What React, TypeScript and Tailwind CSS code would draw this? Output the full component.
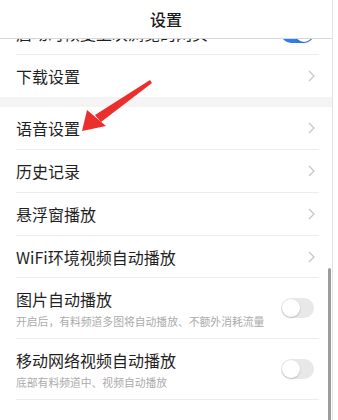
import React from 'react';

const FONT = '"Noto Sans CJK SC", "Noto Sans", sans-serif';

function Chevron() {
  return (
    <svg width="7" height="12" viewBox="0 0 7 12" className="mr-[4px]">
      <polyline points="1,1 6,6 1,11" fill="none" stroke="#c4c4c4" strokeWidth="1.2" />
    </svg>
  );
}

function Toggle({ on }: { on?: boolean }) {
  return (
    <div
      className={`w-[33px] h-[20px] rounded-full relative mr-[5px] ${on ? 'bg-[#2f7cf3]' : 'bg-[#e8e8e8]'}`}
    >
      <div
        className={`absolute top-[1px] w-[18px] h-[18px] rounded-full bg-white shadow-[0_1px_2px_rgba(0,0,0,0.2)] ${on ? 'right-[1px]' : 'left-[1px]'}`}
      />
    </div>
  );
}

function Row({ title, h = 'h-[43px]', line = true, right }: { title: string; h?: string; line?: boolean; right: React.ReactNode }) {
  return (
    <div className="pl-4 bg-white">
      <div className={`${h} mr-[13px] flex items-center justify-between ${line ? 'border-b border-[#ececec]' : ''}`}>
        <span className="text-[16px] text-[#1f1f1f] leading-none">{title}</span>
        {right}
      </div>
    </div>
  );
}

function Row2({ title, sub, on }: { title: string; sub: string; on?: boolean }) {
  return (
    <div className="pl-4 bg-white">
      <div className="h-[61px] mr-[13px] flex items-center justify-between border-b border-[#ececec]">
        <div className="flex flex-col">
          <span className="text-[16px] text-[#1f1f1f] leading-none pt-[2px]">{title}</span>
          <span className="text-[10.8px] text-[#ababab] leading-none mt-[9px]">{sub}</span>
        </div>
        <Toggle on={on} />
      </div>
    </div>
  );
}

export default function App() {
  return (
    <div className="w-[338px] h-[420px] overflow-hidden relative bg-white" style={{ fontFamily: FONT }}>
      <div className="flex h-full">
        <div className="w-[333px] flex flex-col border-r border-[#e4e4e4]">
          <div className="h-[39px] shrink-0 flex items-center justify-center border-b border-[#d8d8d8] bg-white">
            <span className="text-[16px] font-medium text-[#1a1a1a] leading-none">设置</span>
          </div>
          <div className="flex-1 overflow-hidden">
            <div className="-mt-[27px]">
              <Row title="启动时恢复上次浏览的网页" right={<Toggle on />} />
              <Row title="下载设置" h="h-[42px]" line={false} right={<Chevron />} />
              <div className="h-[10px] bg-[#f4f4f4]" />
              <Row title="语音设置" right={<Chevron />} />
              <Row title="历史记录" right={<Chevron />} />
              <Row title="悬浮窗播放" right={<Chevron />} />
              <Row title="WiFi环境视频自动播放" h="h-[42px]" right={<Chevron />} />
              <Row2 title="图片自动播放" sub="开启后，有料频道多图将自动播放、不额外消耗流量" />
              <Row2 title="移动网络视频自动播放" sub="底部有料频道中、视频自动播放" />
              <Row2 title="搜索免流量" sub="" on />
            </div>
          </div>
        </div>
      </div>

      {/* scrollbar */}
      <div className="absolute left-[328px] top-[268px] w-[3px] h-[160px] rounded-full bg-[#9c9c9c]" />

      {/* red arrow annotation */}
      <svg className="absolute left-0 top-0 pointer-events-none" width="338" height="420" viewBox="0 0 338 420">
        <polygon points="150,80 152,83 101,122 95,115" fill="#ea2f2d" />
        <polygon points="82,131 87,110 106,126" fill="#ea2f2d" />
      </svg>
    </div>
  );
}
